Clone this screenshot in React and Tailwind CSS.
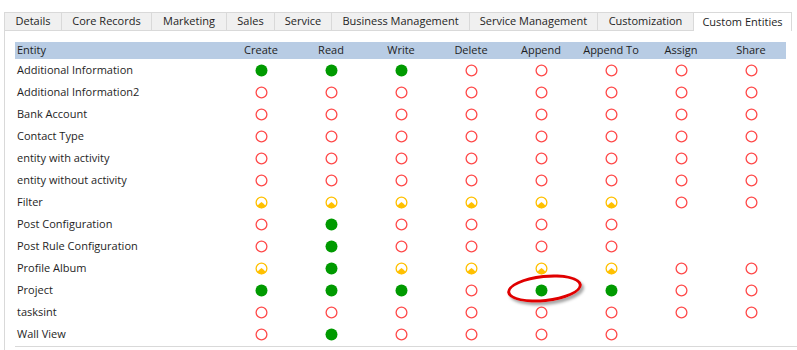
import React from 'react';

// tab strip across the top
const tabs = [
  { name: 'Details', w: 'w-[57px]' },
  { name: 'Core Records', w: 'w-[90px]' },
  { name: 'Marketing', w: 'w-[75px]' },
  { name: 'Sales', w: 'w-[48px]' },
  { name: 'Service', w: 'w-[57px]' },
  { name: 'Business Management', w: 'w-[138px]' },
  { name: 'Service Management', w: 'w-[128px]' },
  { name: 'Customization', w: 'w-[96px]' },
  { name: 'Custom Entities', w: 'w-[99px]', active: true },
];

const columns = ['Create', 'Read', 'Write', 'Delete', 'Append', 'Append To', 'Assign', 'Share'];

// G = granted (green), R = none (red ring), Y = partial (yellow), N = not applicable
const rows = [
  ['Additional Information', 'GGGRRRRR'],
  ['Additional Information2', 'RRRRRRRR'],
  ['Bank Account', 'RRRRRRRR'],
  ['Contact Type', 'RRRRRRRR'],
  ['entity with activity', 'RRRRRRRR'],
  ['entity without activity', 'RRRRRRRR'],
  ['Filter', 'YYYYYYRR'],
  ['Post Configuration', 'RGRRRRNN'],
  ['Post Rule Configuration', 'RGRRRRNN'],
  ['Profile Album', 'YGYYYYRR'],
  ['Project', 'GGGRGGRR'],
  ['tasksint', 'RRRRRRRR'],
  ['Wall View', 'RGRRRRNN'],
];

const Icon = ({ kind }) => {
  if (kind === 'G') {
    return (
      <svg width="13" height="13" viewBox="0 0 13 13">
        <circle cx="6.5" cy="6.5" r="6" fill="#009a00" />
      </svg>
    );
  }
  if (kind === 'R') {
    return (
      <svg width="13" height="13" viewBox="0 0 13 13">
        <circle cx="6.5" cy="6.5" r="5.4" fill="none" stroke="#ff4a4a" strokeWidth="1.3" />
      </svg>
    );
  }
  if (kind === 'Y') {
    return (
      <svg width="13" height="13" viewBox="0 0 13 13">
        <circle cx="6.5" cy="6.5" r="5.4" fill="#fff" stroke="#ffc000" strokeWidth="1.3" />
        <path d="M2.2 10 L4.6 7.4 L6.5 5.9 L8.4 7.4 L10.8 10 A5.4 5.4 0 0 1 2.2 10 Z" fill="#ffc000" />
      </svg>
    );
  }
  return null;
};

const App = () => {
  return (
    <div className="w-[797px] h-[350px] bg-white overflow-hidden pt-3 pl-1 text-[11px] text-[#1e1e1e] font-['Open_Sans',sans-serif]">
      <div className="flex h-[19px]">
        {tabs.map((t) => (
          <div
            key={t.name}
            className={`${t.w} h-[19px] flex items-center justify-center border-t border-l border-[#d9d9d9] ${
              t.active ? 'bg-white border-r' : 'bg-[#f0f0f0] border-b'
            }`}
          >
            {t.name}
          </div>
        ))}
      </div>

      <div className="relative border-l border-[#d9d9d9] h-[320px] pt-[11px] pl-[10px]">
        <div className="w-[771px]">
          <div className="flex h-[17px] items-center bg-[#b8cce4]">
            <div className="w-[211px] pl-[2px]">Entity</div>
            {columns.map((c) => (
              <div key={c} className="w-[70px] text-center">{c}</div>
            ))}
          </div>
          {rows.map(([name, perms]) => (
            <div key={name} className="flex h-[22px] items-center">
              <div className="w-[211px] pl-[2px]">{name}</div>
              {perms.split('').map((p, i) => (
                <div key={i} className="w-[70px] flex justify-center">
                  <Icon kind={p} />
                </div>
              ))}
            </div>
          ))}
        </div>
        <div className="w-[782px] border-t border-[#d9d9d9] mt-[1px]" />

        {/* hand-drawn red highlight around Project / Append */}
        <div className="absolute left-[502px] top-[244px] w-[75px] h-[27px] rounded-[50%] border-[3px] border-[#e00000] -rotate-[6deg] shadow-[2px_3px_3px_rgba(0,0,0,0.35)]" />
      </div>
    </div>
  );
};

export default App;
